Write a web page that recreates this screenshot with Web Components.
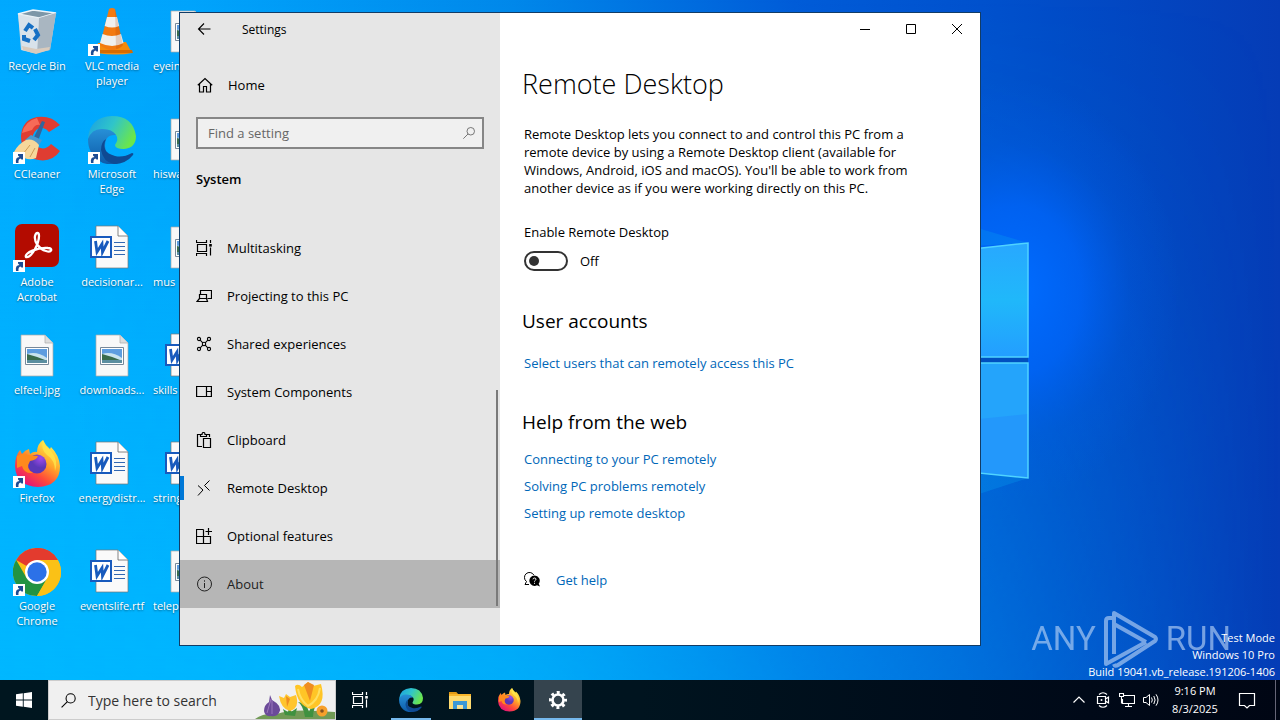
<!DOCTYPE html>
<html lang="en">
<head>
<meta charset="utf-8">
<title>Settings</title>
<style>
html, body {
  margin: 0;
  height: 100%;
  overflow: hidden;
}
body {
  font-family: "Open Sans", "Noto Sans", sans-serif;
  font-size: 13px;
  color: #000;
}
</style>
</head>
<body>
<win-desktop>
  <desk-icon icon="bin">Recycle Bin</desk-icon>
  <desk-icon icon="ccleaner" shortcut>CCleaner</desk-icon>
  <desk-icon icon="acrobat" shortcut>Adobe Acrobat</desk-icon>
  <desk-icon icon="image">elfeel.jpg</desk-icon>
  <desk-icon icon="firefox" shortcut>Firefox</desk-icon>
  <desk-icon icon="chrome" shortcut>Google Chrome</desk-icon>
  <desk-icon icon="vlc" shortcut>VLC media player</desk-icon>
  <desk-icon icon="edge" shortcut>Microsoft Edge</desk-icon>
  <desk-icon icon="word">decisionar...</desk-icon>
  <desk-icon icon="image">downloads...</desk-icon>
  <desk-icon icon="word">energydistr...</desk-icon>
  <desk-icon icon="word">eventslife.rtf</desk-icon>
  <desk-icon icon="image" clipped>eyein</desk-icon>
  <desk-icon icon="image" clipped>hiswa</desk-icon>
  <desk-icon icon="image" clipped>mus</desk-icon>
  <desk-icon icon="word" clipped>skills</desk-icon>
  <desk-icon icon="word" clipped>string</desk-icon>
  <desk-icon icon="image" clipped>telep</desk-icon>

  <build-info slot="overlay"></build-info>

  <settings-window slot="window">
    <nav-item slot="nav" icon="multitask">Multitasking</nav-item>
    <nav-item slot="nav" icon="project">Projecting to this PC</nav-item>
    <nav-item slot="nav" icon="shared">Shared experiences</nav-item>
    <nav-item slot="nav" icon="components">System Components</nav-item>
    <nav-item slot="nav" icon="clipboard">Clipboard</nav-item>
    <nav-item slot="nav" icon="remote" selected>Remote Desktop</nav-item>
    <nav-item slot="nav" icon="optional">Optional features</nav-item>
    <nav-item slot="nav" icon="about" hovered>About</nav-item>
    <remote-page></remote-page>
  </settings-window>

  <task-bar slot="taskbar"></task-bar>
</win-desktop>

<script>
// [viewBox size, markup]; line icons use currentColor
const ICONS = {
  back: [16, `<path d="M14.5 8H2.500M8 2.500 2.500 8 8 13.500" fill="none" stroke="currentColor" stroke-width="1.100"/>`],
  home: [16, `<path d="M.8 8.300 8 1.600l7.200 6.700M2.500 7v8h4V9.500h3V15h4V7" fill="none" stroke="currentColor" stroke-width="1.200"/>`],
  search: [16, `<circle cx="10" cy="6" r="4.300" fill="none" stroke="currentColor"/><path d="M7 9 1.500 14.500" stroke="currentColor"/>`],
  multitask: [16, `<path d="M.5 0v2.500h10V0M.5 16v-2.500h10V16M1.500 4.500h9v7h-9zM14.500 0v3M14.500 7.500v8" fill="none" stroke="currentColor" stroke-width="1.200"/><path d="M13.200 4h2.600v2.600h-2.600z" fill="currentColor"/>`],
  project: [16, `<path d="M4.500 6V2.500h11v8h-4M3.500 6.500h7v4h-7zM3.500 10.500l-2.500 3h10.500l-1-3" fill="none" stroke="currentColor" stroke-width="1.200"/>`],
  shared: [16, `<g fill="none" stroke="currentColor" stroke-width="1.100"><circle cx="3" cy="3" r="1.600"/><circle cx="13" cy="3" r="1.600"/><circle cx="3" cy="13" r="1.600"/><circle cx="13" cy="13" r="1.600"/><circle cx="8" cy="8" r="1.700"/><path d="m4.200 4.200 2.600 2.600M11.800 4.200 9.200 6.800M4.200 11.800l2.600-2.600M11.800 11.800 9.200 9.200"/></g>`],
  components: [16, `<path d="M.6 2.500h14.800v10H.6zM10.500 2.500v10M10.500 7.500h5" fill="none" stroke="currentColor" stroke-width="1.200"/>`],
  clipboard: [16, `<path d="M6 14.500H1.500v-12H5M10 2.500h3.500V5M4.500 4.500v-2H6q0-2 1.500-2T9 2.500h1.500v2zM7.500 6.500h7v9h-7z" fill="none" stroke="currentColor" stroke-width="1.200"/>`],
  remote: [16, `<path d="M2 5.500 7 10l-5 5.500M13.500.5 8.500 5.500l5 5" fill="none" stroke="currentColor"/>`],
  optional: [16, `<path d="M7.500 1.500h-7v14h14v-7H.5M7.500 1.500v14M12.500 0v7M9.500 3.500H16" fill="none" stroke="currentColor" stroke-width="1.200"/>`],
  about: [16, `<circle cx="8.500" cy="8" r="7" fill="none" stroke="currentColor"/><path d="M8.500 7v5M8.500 4.300v1.400" stroke="currentColor"/>`],
  help: [16, `<path d="M2.500 9.500A5 5 0 1 1 9.800 3M2.500 9.500 1 12.500h4" fill="none" stroke="currentColor"/><path d="M10.500 3.500a5.200 5.200 0 1 0 2.500 9.800l3 1.200-1.300-2.700a5.200 5.200 0 0 0-4.200-8.300z" fill="currentColor"/><path d="M9 7.300q.1-1.300 1.500-1.300T12 7.200q0 .7-.8 1.200-.7.400-.7 1.200M10.500 10.800v1" fill="none" stroke="#fff"/>`],
  minimize: [10, `<path d="M0 5.500h10" stroke="currentColor"/>`],
  maximize: [10, `<path d="M.5.5h9v9h-9z" fill="none" stroke="currentColor"/>`],
  close: [10, `<path d="m0 0 10 10M10 0 0 10" stroke="currentColor"/>`],
  start: [16, `<path d="M0 2.300 6.800 1.300v6.300H0zM7.700 1.200 16 0v7.600H7.700zM0 8.400h6.800v6.300L0 13.700zM7.700 8.400H16V16l-8.300-1.200z" fill="#fff"/>`],
  chevron: [16, `<path d="M2.500 10.500 8 5l5.500 5.500" fill="none" stroke="currentColor" stroke-width="1.200"/>`],
  meet: [16, `<path d="M4 2.500Q8-1 12 2.500M4 13.500q4 3.500 8 0M2.500 4.500h8v7h-8zM10.500 7l3-2v6l-3-2" fill="none" stroke="currentColor" stroke-width="1.200"/><circle cx="6.500" cy="8" r="1" fill="currentColor"/>`],
  network: [16, `<path d="M5 3.500h10.500v8H3.500V7M9.500 11.500v3M6 14.500h7M.5 1.500h4v3h-4zM2.500 4.500v7" fill="none" stroke="currentColor" stroke-width="1.100"/>`],
  volume: [16, `<path d="M.5 5.500H3l3.500-3v11l-3.500-3H.5zM8.500 5.500q1.600 2.500 0 5M10.800 4q2.600 4 0 8M13 2.300q4 5.700 0 11.400" fill="none" stroke="currentColor"/>`],
  notify: [18, `<path d="M1.500 2.500h15v12h-5L9 17l-2.500-2.500h-5z" fill="none" stroke="currentColor" stroke-width="1.200"/>`],
  gear: [20, `<g fill="none" stroke="#fff"><circle cx="10" cy="10" r="5.500" stroke-width="2.600"/><circle cx="10" cy="10" r="7.500" stroke-width="3" stroke-dasharray="2.945 2.945" stroke-dashoffset="1.472"/></g>`],
  explorer: [24, `<path d="M1 4h7l2 2h13v14H1z" fill="#f9b62b"/><path d="M1 8h22v13H1z" fill="#ffdb70"/><path d="M1 4h7l1.500 2H1z" fill="#e29a14"/><path d="M5 13h14v8h-4v-4H9v4H5z" fill="#3c98d5"/><path d="M9 17h6v3H9z" fill="#f5e29d"/>`],
  bin: [48, `<path d="m5 6 38-1-6 37-17 3-12-3z" fill="#c7d3dc"/><path d="m5 6 15-4 23 3-17 5z" fill="#7d97a8" stroke="#eef5fa" stroke-width="1.500"/><path d="m26 10 17-5-6 37-13 3z" fill="#a9b6c1"/><path d="m5 6 21 4-2 35-15-3z" fill="#dce6ed" opacity=".8"/><path d="M9 38 23 41l14-2-1 3-13 4-13-4z" fill="#d9cbbd"/><g fill="none" stroke="#1670c4" stroke-width="4"><path d="m12 23 4-6 4 3"/><path d="m22 21 3 6-4 5"/><path d="m17 33-6-2v-4"/></g>`],
  vlc: [48, `<path d="m10 35 28-1 6 11q-14 3-36 0z" fill="#f58a0c"/><path d="M7 42h37l1 3H7z" fill="#d56b02"/><path d="M21 1q3-2 6 0l8 36q-5 5-11 5t-12-5z" fill="#f37a10"/><path d="m19 9 10 0 2.200 9q-7 3-14.500 0zM14.500 26q9.500 4 18.500 0l2.500 9q-11 6-23.500 0z" fill="#f0f0ee"/><path d="m27 1 8 36q-3 4-7 4z" fill="#a83b00" opacity=".2"/>`],
  ccleaner: [48, `<path d="M47 9Q38-1 24 1 9 4 8 20q0 17 13 23 17 5 26-8l-9-7q-6 7-13 3-6-4-5-12 3-8 10-7 4 1 6 4z" fill="#df3d32"/><path d="M24 2Q12 5 9 17l10-3q3-6 8-5z" fill="#f66b58"/><path d="m29 5 3 1-7 19-5-2z" fill="#32669c"/><path d="m18 19 11 5-4 7-13-7z" fill="#4b9ad0"/><path d="M13 24q7-2 13 5l-3 13q-9 4-17-4l-5-2q4-8 12-12z" fill="#f6d79b"/><path d="m17 29-7 9m12-6-5 9" stroke="#cf9c55"/>`],
  acrobat: [48, `<rect x="2" width="44" height="43" rx="7" fill="#b30b00"/><path d="M13 33c-2-4 12-10 22-9 5 0 4 5-2 3-7-2-12-9-11-15 1-4 4-4 4 0 0 7-7 22-13 21z" fill="none" stroke="#fff" stroke-width="2.300"/>`],
  image: [48, `<path d="M8 3h24l8 8v33H8z" fill="#f8f8f8" stroke="#aaa" stroke-width=".7"/><path d="M32 3v8h8" fill="#ddd" stroke="#aaa" stroke-width=".7"/><path d="M12.500 15.500h23v17h-23z" fill="#fff" stroke="#789"/><path d="M14 17h20v14H14z" fill="#5d9ddf"/><path d="M14 22q10-3 20 4v5H14z" fill="#c9e3ee"/><path d="M14 22q8 2 18 6H14z" fill="#396b4c"/><path d="M14 28h20v3H14z" fill="#5b8ea0"/>`],
  word: [48, `<path d="M8 2h22l10 10v32H8z" fill="#fafafa" stroke="#777" stroke-width=".7"/><path d="M30 2v10h10" fill="#fff" stroke="#666" stroke-width=".8"/><path d="M26 18.500h11M26 22.500h11M26 26.500h11M26 30.500h11" stroke="#3368b3" stroke-width="1.200"/><path d="M3 13h20v20H3z" fill="#fff" stroke="#185abd" stroke-width="2"/><path d="m7.500 17 1.500 11 5-8 .5 8 5.500-11" fill="none" stroke="#185abd" stroke-width="2.800"/>`],
  firefox: [48, `<defs><linearGradient id="ff" x1=".9" y1=".1" x2=".3" y2="1"><stop offset="0" stop-color="#fff44f"/><stop offset=".4" stop-color="#ffa52a"/><stop offset=".7" stop-color="#ff4a3a"/><stop offset="1" stop-color="#e3127b"/></linearGradient><radialGradient id="fp" cx=".7" cy=".2"><stop offset="0" stop-color="#a04bea"/><stop offset="1" stop-color="#5a38b8"/></radialGradient></defs><path d="M30 0q2 5 7 9l1-2q8 8 9 19 0 20-22 21Q3 46 2 26q0-10 5-16l2 4q3-4 7-5l1 5q4-3 7-2 0-8 6-12z" fill="url(#ff)"/><circle cx="24" cy="24" r="9.500" fill="url(#fp)"/><path d="M4 16q6-4 11-1l10 1q-1 4-8 5-5 8 3 12-9 1-11-7l-5 2z" fill="#ff8a1d"/><path d="M30 0q2 6 8 11 8 10 4 20 0-11-8-16Q27 9 30 0z" fill="#ffe64a" opacity=".8"/>`],
  chrome: [48, `<circle cx="24" cy="24" r="24" fill="#fbc116"/><path d="M24 24 3.200 12A24 24 0 0 1 44.800 12z" fill="#e33b2e"/><path d="M24 12h20.800A24 24 0 0 0 24 0z" fill="#e33b2e"/><path d="M3.200 12 13.600 30 24 36v12A24 24 0 0 1 3.200 12z" fill="#229342"/><path d="m34.400 30-10.400 18-6-13z" fill="#229342"/><path d="M34.400 30 24 48h2A24 24 0 0 0 44.800 12H24z" fill="#fbc116"/><circle cx="24" cy="24" r="12" fill="#fff"/><circle cx="24" cy="24" r="9.700" fill="#2c71e8"/>`],
  edge: [48, `<defs><linearGradient id="ea" x1="0" x2="1" y1=".1" y2=".5"><stop offset="0" stop-color="#1ba0e2"/><stop offset=".5" stop-color="#30c5c9"/><stop offset="1" stop-color="#6be64b"/></linearGradient><linearGradient id="eb" y2="1" x2="0"><stop offset="0" stop-color="#2790d7"/><stop offset="1" stop-color="#0d5aa8"/></linearGradient></defs><path d="M0 22Q2 1 24 0q21 0 24 20 0 12-12 13-9 0-9-4 4-6 1-10-8-9-20-2z" fill="url(#ea)"/><path d="M0 23q4-11 15-10 9 0 13 6-11-1-11 11 1 14 14 18-20 3-28-12Q0 31 0 23z" fill="url(#eb)"/><path d="M18 23q-6 13 9 17 8 2 17-3 2 0 1 2-7 9-19 9-11-2-13-14 0-8 5-11z" fill="#0f4a93"/>`],
  flowers: [80, `<path d="M0 80q8-6 22-5 14-6 58-2v7z" fill="#719a55"/><path d="M30 76 28 70l5 3 2-7 1 7 6-4-2 8zM50 78q-2-12-7-15 8 0 11 10 3-9 10-10-6 5-6 15z" fill="#3f9140"/><path d="m15 56 2 5q11 6 7 13-3 4-8 3-6 1-7-5 0-6 5-9z" fill="#6b4a99"/><path d="m16 60-4 14m5-13v14" stroke="#9a77bb" fill="none"/><path d="m24 57 5 2 2-4 4 3 6-2q4 13-6 16-9-2-11-15z" fill="#ffc52d"/><path d="M40 47q3-3 7 1l6-5 5 4 8-2q6 22-10 25-14-3-16-23z" fill="#ffc526"/><path d="m49 46 4-3 6 3-4 16zM31 57l4 3-3 8z" fill="#ef8d20"/><path d="M43 50q2 11 10 17 10-5 12-18" fill="none" stroke="#ffdf5f" stroke-width="2"/><circle cx="67" cy="72" r="5.500" fill="#f7a02b"/><circle cx="67" cy="72" r="1.800" fill="#87521f"/>`],
};

const arrow = `<svg class="arrow" viewBox="0 0 12 12"><path d="M0 0h12v12H0z" fill="#fff"/><path d="M3 11Q2 5 6.500 5L5 3.500V2h5v5.500H8.500L7.500 6.500Q5 7 5.500 11z" fill="#1d4c93"/></svg>`;

class BaseElement extends HTMLElement {
  connectedCallback() {
    if (this.shadowRoot) return;
    this.attachShadow({ mode: "open" });
    this.shadowRoot.innerHTML = this.render();
  }
}

class SysIcon extends BaseElement {
  render() {
    const [box, markup] = ICONS[this.getAttribute("name")];
    return `
<style>
:host {
  display: block;
  flex: none;
  width: 16px;
  height: 16px;
}
svg {
  display: block;
  width: 100%;
  height: 100%;
}
</style>
<svg viewBox="0 0 ${box} ${box}" aria-hidden="true">${markup}</svg>`;
  }
}

class DeskIcon extends BaseElement {
  render() {
    return `
<style>
:host {
  display: flex;
  flex-direction: column;
  align-items: center;
  gap: 2px;
  padding-top: 8px;
  color: #fff;
  font-size: 11px;
  line-height: 15px;
  text-align: center;
  text-shadow: 0 1px 2px #0007;
}
.pic {
  position: relative;
}
sys-icon {
  width: 48px;
  height: 48px;
}
.arrow {
  position: absolute;
  left: 0;
  bottom: 0;
  width: 12px;
  height: 12px;
}
.label {
  width: 68px;
}
:host([clipped]) .label {
  text-align: left;
}
</style>
<div class="pic"><sys-icon name="${this.getAttribute("icon")}"></sys-icon>${this.hasAttribute("shortcut") ? arrow : ""}</div>
<div class="label"><slot></slot></div>`;
  }
}

class WinDesktop extends BaseElement {
  render() {
    return `
<style>
:host {
  display: flex;
  flex-direction: column;
  height: 100vh;
  position: relative;
  overflow: hidden;
}
.wallpaper {
  position: absolute;
  inset: 0;
  width: 100%;
  height: 100%;
}
main {
  position: relative;
  flex: 1;
  min-height: 0;
}
.icons {
  display: grid;
  grid-auto-flow: column;
  grid-template-rows: repeat(6, 108px);
  grid-auto-columns: 74px;
  column-gap: 1px;
  justify-content: start;
}
</style>
<svg class="wallpaper" viewBox="0 0 1280 720" preserveAspectRatio="none" aria-hidden="true">
  <defs>
    <linearGradient id="base">
      <stop offset="0" stop-color="#00a9ff"/>
      <stop offset=".15" stop-color="#00a4fc"/>
      <stop offset=".4" stop-color="#0088ea"/>
      <stop offset=".62" stop-color="#005cd8"/>
      <stop offset=".78" stop-color="#0050cc"/>
      <stop offset="1" stop-color="#053cb6"/>
    </linearGradient>
    <linearGradient id="low" x2="0" y2="1">
      <stop offset="0" stop-color="#00b8ff" stop-opacity="0"/>
      <stop offset="1" stop-color="#00b8ff"/>
    </linearGradient>
    <linearGradient id="fade">
      <stop offset="0" stop-color="#fff"/>
      <stop offset=".4" stop-color="#fff" stop-opacity=".8"/>
      <stop offset="1" stop-color="#fff" stop-opacity="0"/>
    </linearGradient>
    <mask id="left"><path d="M0 0h1280v720H0z" fill="url(#fade)"/></mask>
    <radialGradient id="glow">
      <stop offset="0" stop-color="#006cff"/>
      <stop offset=".4" stop-color="#0066ff" stop-opacity=".7"/>
      <stop offset=".7" stop-color="#0060f4" stop-opacity=".2"/>
      <stop offset="1" stop-color="#0060f0" stop-opacity="0"/>
    </radialGradient>
    <linearGradient id="pane" x2="0" y2="1">
      <stop offset="0" stop-color="#28a8ff"/>
      <stop offset=".5" stop-color="#20b8fa"/>
      <stop offset="1" stop-color="#239eff"/>
    </linearGradient>
  </defs>
  <path d="M0 0h1280v720H0z" fill="url(#base)"/>
  <path d="M0 0h1280v720H0z" fill="url(#low)" mask="url(#left)"/>
  <ellipse cx="1015" cy="290" rx="165" ry="210" fill="url(#glow)"/>
  <path d="M900 205 1028 243 900 250zM900 520l128-42-128-10z" fill="#08a0f0" opacity=".3"/>
  <path d="M900 357h128v6H900z" fill="#0050c0"/>
  <path d="M900 257 1028 243v114H900z" fill="url(#pane)"/>
  <path d="M900 363h128v115L900 465z" fill="#2398fb"/>
  <path d="M900 363h128v51L900 427z" fill="#24a4fb"/>
  <path d="M900 257 1028 243v114H900M900 363h128v115L900 465" fill="none" stroke="#4fd4ff" stroke-width="1.500"/>
</svg>
<main>
  <div class="icons"><slot></slot></div>
  <slot name="overlay"></slot>
  <slot name="window"></slot>
</main>
<slot name="taskbar"></slot>`;
  }
}

class BuildInfo extends BaseElement {
  render() {
    return `
<style>
:host {
  position: absolute;
  right: 5px;
  bottom: 0;
  color: #fff;
  font-size: 11px;
  line-height: 17px;
  text-align: right;
}
.brand {
  position: absolute;
  right: 44px;
  bottom: 12px;
  display: flex;
  align-items: center;
  gap: 8px;
  color: #b4d0f5;
  opacity: .65;
  font: 33px/58px "Liberation Sans Narrow", Roboto, sans-serif;
}
.brand svg {
  width: 54px;
  height: 58px;
}
.lines {
  position: relative;
  white-space: nowrap;
}
</style>
<div class="brand">
  <span>ANY</span>
  <svg viewBox="0 0 54 58" fill="none" stroke="currentColor" stroke-width="4" stroke-linejoin="round" aria-hidden="true">
    <path d="M8 8H5Q2 8 2 11v43L42 32M10 44V3l41 24q2 2 0 4L14 55q-3 2-4-1M10 14l32 18"/>
  </svg>
  <span>RUN</span>
</div>
<div class="lines">Test Mode<br>Windows 10 Pro<br>Build 19041.vb_release.191206-1406</div>`;
  }
}

class NavItem extends BaseElement {
  render() {
    return `
<style>
:host {
  display: block;
}
a {
  display: flex;
  align-items: center;
  gap: 15px;
  height: 48px;
  padding-left: 16px;
  box-sizing: border-box;
  color: #000;
  font-size: 13px;
  text-decoration: none;
}
:host([selected]) a {
  background: linear-gradient(#0078d7, #0078d7) left / 4px 24px no-repeat;
}
:host([hovered]) a {
  background: #b6b6b6;
  color: #222;
}
</style>
<a href="#"><sys-icon name="${this.getAttribute("icon")}"></sys-icon><slot></slot></a>`;
  }
}

class SettingsWindow extends BaseElement {
  render() {
    return `
<style>
:host {
  position: absolute;
  left: 179px;
  top: 12px;
  display: grid;
  grid-template-columns: 320px 1fr;
  width: 800px;
  border: 1px solid #123c66;
  background: #fff;
}
aside {
  background: #e6e6e6;
  padding-bottom: 37px;
}
.title, .controls {
  display: flex;
  align-items: center;
  height: 32px;
}
.title {
  gap: 30px;
  padding-left: 16px;
  font-size: 12px;
}
.controls {
  justify-content: flex-end;
}
button {
  display: flex;
  align-items: center;
  justify-content: center;
  padding: 0;
  border: 0;
  background: none;
  color: inherit;
}
.controls button {
  width: 46px;
  height: 32px;
}
.controls sys-icon {
  width: 10px;
  height: 10px;
}
.home {
  display: flex;
  align-items: center;
  gap: 15px;
  height: 48px;
  margin-top: 16px;
  padding-left: 17px;
  color: #000;
  font-size: 13px;
  text-decoration: none;
}
.find {
  display: flex;
  align-items: center;
  height: 32px;
  margin: 8px 16px 0;
  padding: 0 6px 0 10px;
  box-sizing: border-box;
  border: 2px solid #868686;
  background: #f0f0f0;
  color: #666;
}
input {
  flex: 1;
  min-width: 0;
  padding: 0;
  border: 0;
  outline: 0;
  background: none;
  font: inherit;
}
input::placeholder {
  color: #666;
}
.find sys-icon {
  width: 14px;
  height: 14px;
}
h2 {
  margin: 20px 16px 35px;
  font-size: 13px;
  line-height: 20px;
  font-weight: 600;
}
nav {
  position: relative;
}
.thumb {
  position: absolute;
  right: 2px;
  top: 166px;
  bottom: 2px;
  width: 2px;
  background: #7a7a7a;
}
</style>
<aside>
  <div class="title"><button aria-label="Back"><sys-icon name="back"></sys-icon></button>Settings</div>
  <a class="home" href="#"><sys-icon name="home"></sys-icon>Home</a>
  <label class="find"><input type="text" placeholder="Find a setting" aria-label="Find a setting"><sys-icon name="search"></sys-icon></label>
  <h2>System</h2>
  <nav><slot name="nav"></slot><div class="thumb"></div></nav>
</aside>
<section>
  <div class="controls">
    <button aria-label="Minimize"><sys-icon name="minimize"></sys-icon></button>
    <button aria-label="Maximize"><sys-icon name="maximize"></sys-icon></button>
    <button aria-label="Close"><sys-icon name="close"></sys-icon></button>
  </div>
  <slot></slot>
</section>`;
  }
}

class RemotePage extends BaseElement {
  render() {
    return `
<style>
:host {
  display: block;
  padding: 19px 56px 0 24px;
  font-size: 13px;
  line-height: 18px;
}
h1 {
  margin: 0 0 21px -2px;
  font-size: 27px;
  line-height: 40px;
  font-weight: 300;
}
h2 {
  margin: 36px 0 19px -2px;
  font-size: 19px;
  line-height: 28px;
  font-weight: 400;
}
.web {
  margin-bottom: 14px;
}
p {
  margin: 0;
}
.name {
  display: block;
  margin: 26px 0 10px;
}
.toggle {
  display: flex;
  align-items: center;
  gap: 12px;
}
input {
  appearance: none;
  display: flex;
  align-items: center;
  width: 44px;
  height: 20px;
  margin: 0;
  padding: 0 3px;
  box-sizing: border-box;
  border: 2px solid #333;
  border-radius: 10px;
}
input::before {
  content: "";
  width: 10px;
  height: 10px;
  border-radius: 50%;
  background: #333;
}
a {
  color: #0067b8;
  text-decoration: none;
}
.links {
  display: flex;
  flex-direction: column;
  align-items: flex-start;
  gap: 9px;
}
.help {
  display: flex;
  align-items: center;
  gap: 16px;
  margin-top: 49px;
}
</style>
<h1>Remote Desktop</h1>
<p>Remote Desktop lets you connect to and control this PC from a remote device by using a Remote Desktop client (available for Windows, Android, iOS and macOS). You'll be able to work from another device as if you were working directly on this PC.</p>
<label class="name" for="enable">Enable Remote Desktop</label>
<div class="toggle"><input type="checkbox" id="enable"><span>Off</span></div>
<h2>User accounts</h2>
<a href="#">Select users that can remotely access this PC</a>
<h2 class="web">Help from the web</h2>
<div class="links">
  <a href="#">Connecting to your PC remotely</a>
  <a href="#">Solving PC problems remotely</a>
  <a href="#">Setting up remote desktop</a>
</div>
<div class="help"><sys-icon name="help"></sys-icon><a href="#">Get help</a></div>`;
  }
}

class TaskBar extends BaseElement {
  render() {
    return `
<style>
:host {
  position: relative;
  display: flex;
  height: 40px;
  background: linear-gradient(90deg, #00161f, #00141f 50%, #000918 85%, #000614);
  color: #fff;
}
button {
  display: flex;
  align-items: center;
  justify-content: center;
  width: 48px;
  padding: 0;
  border: 0;
  background: none;
  color: inherit;
  font: inherit;
}
.search {
  display: flex;
  align-items: center;
  width: 288px;
  padding-left: 11px;
  box-sizing: border-box;
  gap: 11px;
  border: 1px solid #ccc;
  background: #f0f0f0;
  color: #000;
}
input {
  flex: 1;
  min-width: 0;
  padding: 0;
  border: 0;
  outline: 0;
  background: none;
  font: 14px "Open Sans", "Noto Sans", sans-serif;
}
input::placeholder {
  color: #333;
}
.search .glass {
  width: 17px;
  height: 17px;
}
.search .flowers {
  width: 80px;
  height: 80px;
  align-self: flex-end;
}
.apps {
  display: flex;
  gap: 1px;
  padding-left: 3px;
}
.apps sys-icon {
  width: 24px;
  height: 24px;
}
.apps .gear {
  width: 20px;
  height: 20px;
}
.running {
  background: linear-gradient(#76b9ed, #76b9ed) bottom / 40px 2px no-repeat;
}
.active {
  background: linear-gradient(#76b9ed, #76b9ed) bottom / 100% 2px no-repeat #35444e;
}
.tray {
  display: flex;
  margin-left: auto;
}
.tray button {
  width: 24px;
}
.tray .clock {
  width: 64px;
  font-size: 11px;
  line-height: 18px;
}
.tray .notify {
  width: 40px;
}
.notify sys-icon {
  width: 18px;
  height: 18px;
}
.tray .show {
  width: 5px;
  margin-left: 8px;
  border-left: 1px solid #667;
}
</style>
<button aria-label="Start"><sys-icon name="start"></sys-icon></button>
<label class="search">
  <sys-icon class="glass" name="search"></sys-icon>
  <input type="text" placeholder="Type here to search" aria-label="Type here to search">
  <sys-icon class="flowers" name="flowers"></sys-icon>
</label>
<button aria-label="Task View"><sys-icon name="multitask"></sys-icon></button>
<div class="apps">
  <button class="running" aria-label="Microsoft Edge"><sys-icon name="edge"></sys-icon></button>
  <button aria-label="File Explorer"><sys-icon name="explorer"></sys-icon></button>
  <button aria-label="Firefox"><sys-icon name="firefox"></sys-icon></button>
  <button class="active" aria-label="Settings"><sys-icon class="gear" name="gear"></sys-icon></button>
</div>
<div class="tray">
  <button aria-label="Show hidden icons"><sys-icon name="chevron"></sys-icon></button>
  <button aria-label="Meet Now"><sys-icon name="meet"></sys-icon></button>
  <button aria-label="Network"><sys-icon name="network"></sys-icon></button>
  <button aria-label="Volume"><sys-icon name="volume"></sys-icon></button>
  <button class="clock">9:16 PM<br>8/3/2025</button>
  <button class="notify" aria-label="Notifications"><sys-icon name="notify"></sys-icon></button>
  <button class="show" aria-label="Show desktop"></button>
</div>`;
  }
}

customElements.define("sys-icon", SysIcon);
customElements.define("desk-icon", DeskIcon);
customElements.define("build-info", BuildInfo);
customElements.define("nav-item", NavItem);
customElements.define("remote-page", RemotePage);
customElements.define("settings-window", SettingsWindow);
customElements.define("task-bar", TaskBar);
customElements.define("win-desktop", WinDesktop);
</script>
</body>
</html>
